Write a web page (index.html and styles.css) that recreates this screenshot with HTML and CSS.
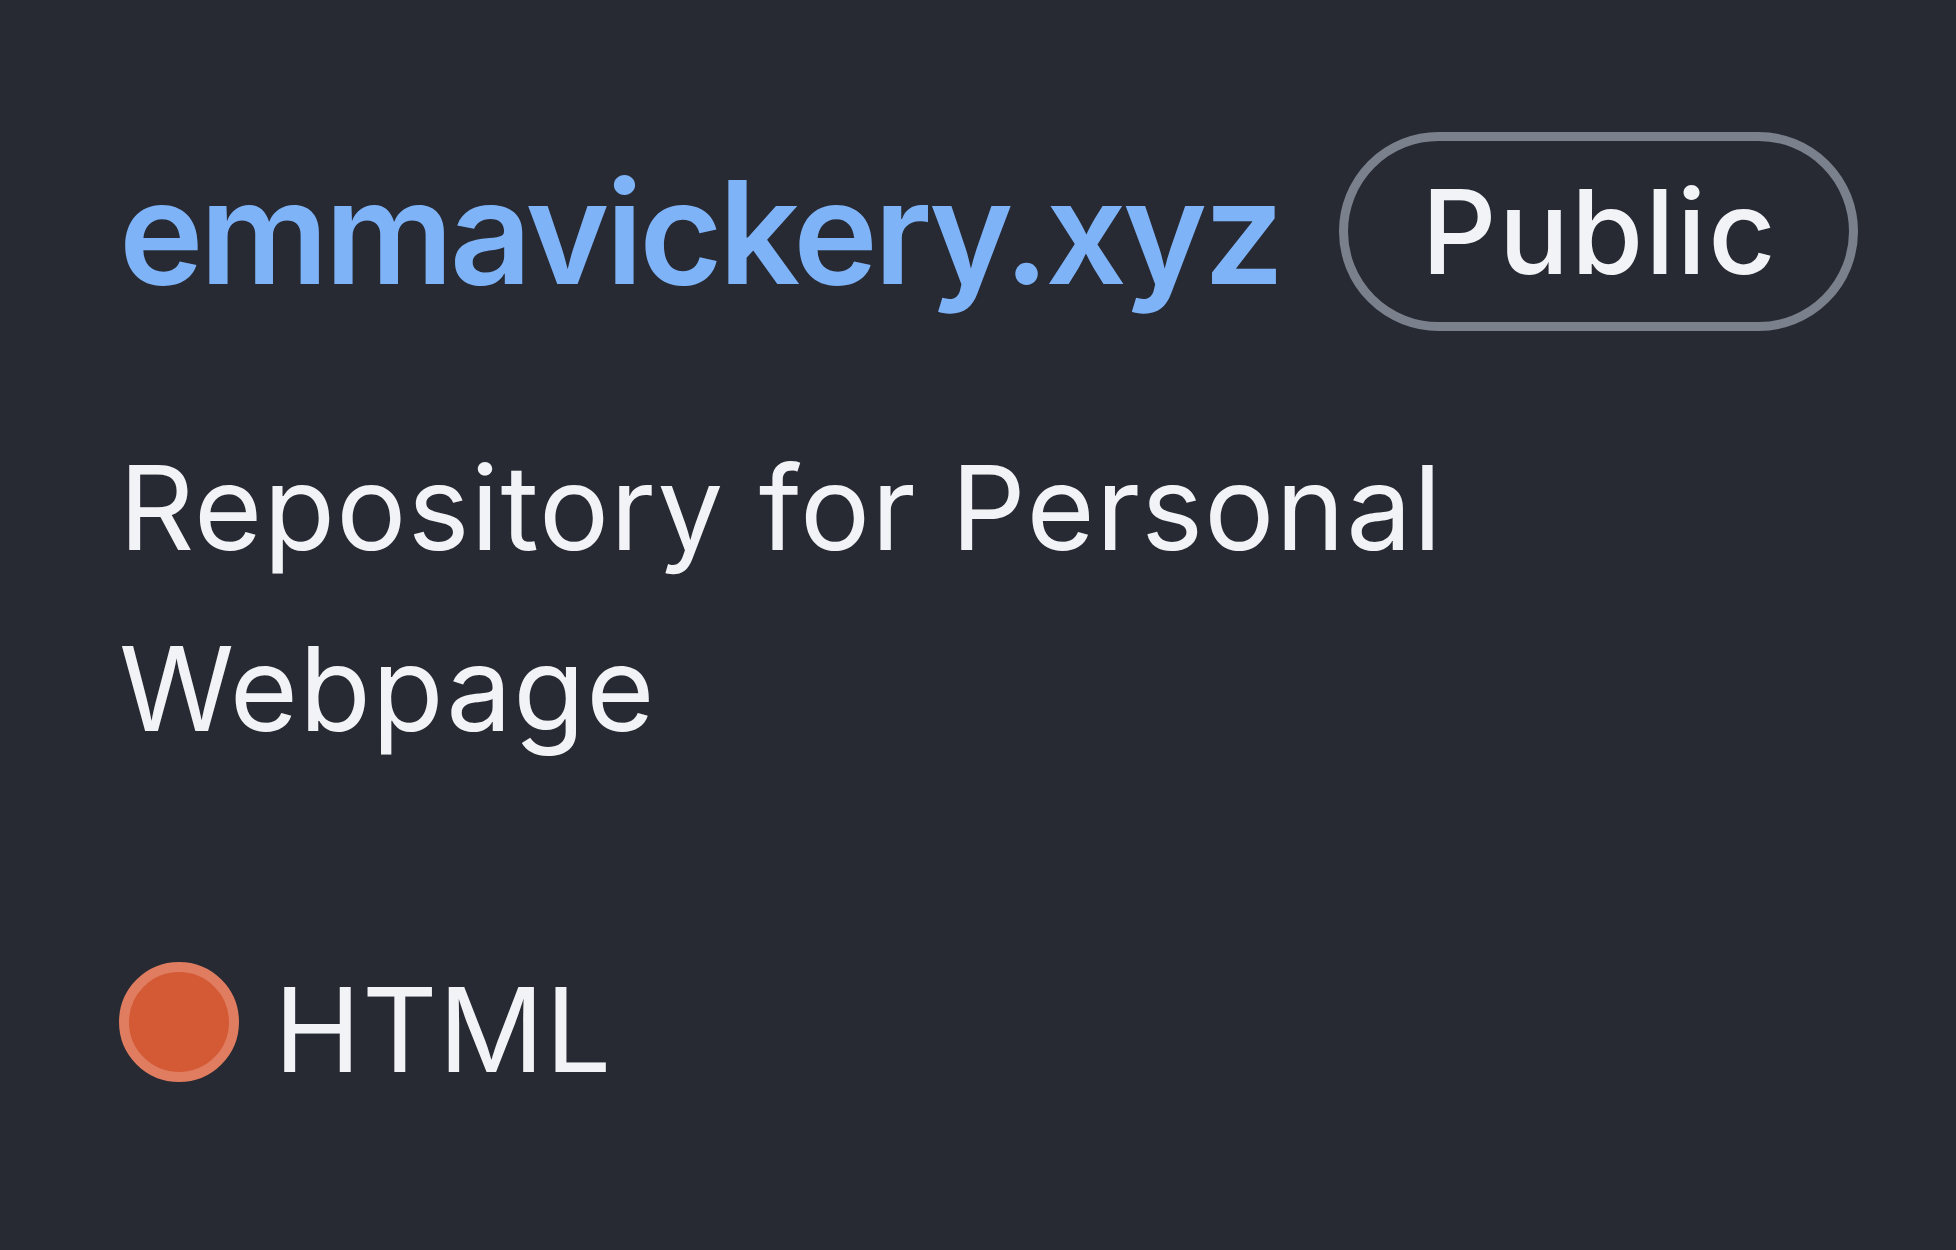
FILE: index.html
```html
<!DOCTYPE html>
<html lang="en">
<head>
<meta charset="utf-8">
<title>emmavickery.xyz</title>
<link rel="stylesheet" href="styles.css">
</head>
<body>
<div class="card">
  <div class="card-head">
    <a class="repo-name" href="#">emmavickery.xyz</a>
    <span class="badge">Public</span>
  </div>
  <p class="desc">Repository for Personal Webpage</p>
  <div class="lang">
    <span class="lang-dot"></span>
    <span class="lang-name">HTML</span>
  </div>
</div>
</body>
</html>
```

FILE: styles.css
```css
html, body {
  margin: 0;
  padding: 0;
  background: #272a33;
  height: 100%;
}
body {
  font-family: Inter, "Noto Sans", "Liberation Sans", sans-serif;
  color: #f1f3f6;
  overflow: hidden;
}
.card {
  padding: 132px 0 0 119px;
}
.card-head {
  display: flex;
  align-items: center;
  gap: 58px;
}
.repo-name {
  font-size: 143px;
  font-weight: 600;
  color: #7fb3f8;
  text-decoration: none;
  line-height: 1.21;
  letter-spacing: -3.8px;
}
.badge {
  box-sizing: border-box;
  height: 199px;
  display: flex;
  align-items: center;
  padding: 0 71px 0 74px;
  border: 9px solid #7b818c;
  border-radius: 100px;
  font-size: 117px;
  font-weight: 500;
  line-height: 1;
  letter-spacing: 2px;
}
.desc {
  margin: 86px 0 0;
  font-size: 117px;
  line-height: 181px;
  font-weight: 400;
  letter-spacing: 1.3px;
  max-width: 1500px;
}
.lang {
  margin-top: 183px;
  display: flex;
  align-items: flex-start;
  gap: 35px;
}
.lang-dot {
  box-sizing: border-box;
  width: 120px;
  height: 120px;
  border-radius: 50%;
  background: #d45a35;
  border: 10px solid #e07c5f;
  flex: none;
}
.lang-name {
  font-size: 117px;
  line-height: 1.21;
  margin-top: -3px;
  letter-spacing: 1px;
}
```
